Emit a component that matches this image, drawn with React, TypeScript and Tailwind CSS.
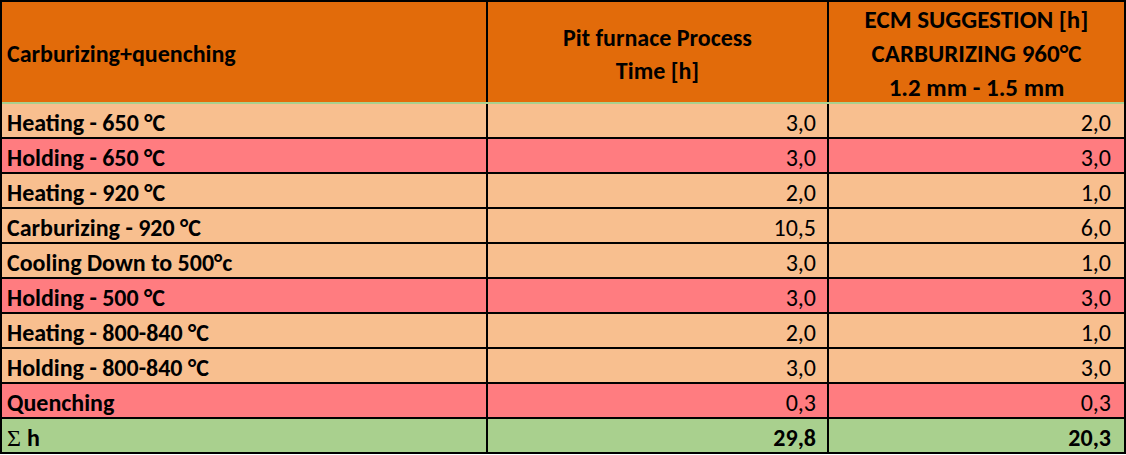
import React from "react";

type Row = {
  label: string;
  pit: string;
  ecm: string;
  tone: "peach" | "pink";
};

const ROWS: Row[] = [
  { label: "Heating - 650 °C", pit: "3,0", ecm: "2,0", tone: "peach" },
  { label: "Holding - 650 °C", pit: "3,0", ecm: "3,0", tone: "pink" },
  { label: "Heating - 920 °C", pit: "2,0", ecm: "1,0", tone: "peach" },
  { label: "Carburizing - 920 °C", pit: "10,5", ecm: "6,0", tone: "peach" },
  { label: "Cooling Down to 500°c", pit: "3,0", ecm: "1,0", tone: "peach" },
  { label: "Holding - 500 °C", pit: "3,0", ecm: "3,0", tone: "pink" },
  { label: "Heating - 800-840 °C", pit: "2,0", ecm: "1,0", tone: "peach" },
  { label: "Holding - 800-840 °C", pit: "3,0", ecm: "3,0", tone: "peach" },
  { label: "Quenching", pit: "0,3", ecm: "0,3", tone: "pink" },
];

const font = {
  fontFamily: 'Carlito, Calibri, "Open Sans", "Noto Sans", sans-serif',
};

export default function App() {
  return (
    <div className="w-[1126px] h-[455px] bg-white text-black" style={font}>
      <div className="w-[1126px] border-2 border-black">
        {/* header */}
        <div className="flex h-[102px] bg-[#E26B0A] border-b-2 border-[#A9D08E] font-bold text-[24px]">
          <div className="w-[486px] border-r-2 border-black flex items-center pl-[5px] pt-[4px]">
            Carburizing+quenching
          </div>
          <div className="w-[341px] border-r-2 border-black flex flex-col items-center justify-center leading-[33px] pt-[4px]">
            <span>Pit furnace Process</span>
            <span>Time [h]</span>
          </div>
          <div className="flex-1 flex flex-col items-center justify-center leading-[34px] pt-[4px] text-[25px]">
            <span>ECM SUGGESTION [h]</span>
            <span>CARBURIZING 960°C</span>
            <span>1.2 mm - 1.5 mm</span>
          </div>
        </div>

        {ROWS.map((r) => (
          <div
            key={r.label}
            className={
              "flex h-[35px] border-b-2 border-black text-[24px] leading-none " +
              (r.tone === "pink" ? "bg-[#FF7C80]" : "bg-[#F8BF8F]")
            }
          >
            <div className="w-[486px] border-r-2 border-black flex items-center pl-[5px] pt-[4px] font-bold">
              {r.label}
            </div>
            <div className="w-[341px] border-r-2 border-black flex items-center justify-end pr-[11px] pt-[4px]">
              {r.pit}
            </div>
            <div className="flex-1 flex items-center justify-end pr-[13px] pt-[4px]">
              {r.ecm}
            </div>
          </div>
        ))}

        {/* total */}
        <div className="flex h-[33px] bg-[#A9D08E] text-[24px] leading-none font-bold">
          <div className="w-[486px] border-r-2 border-black flex items-center pl-[5px] pt-[4px]">
            <span className="font-normal" style={{ fontFamily: '"Liberation Serif", serif' }}>
              Σ
            </span>
            <span className="ml-[6px]">h</span>
          </div>
          <div className="w-[341px] border-r-2 border-black flex items-center justify-end pr-[11px] pt-[4px]">
            29,8
          </div>
          <div className="flex-1 flex items-center justify-end pr-[13px] pt-[4px]">
            20,3
          </div>
        </div>
      </div>
    </div>
  );
}
